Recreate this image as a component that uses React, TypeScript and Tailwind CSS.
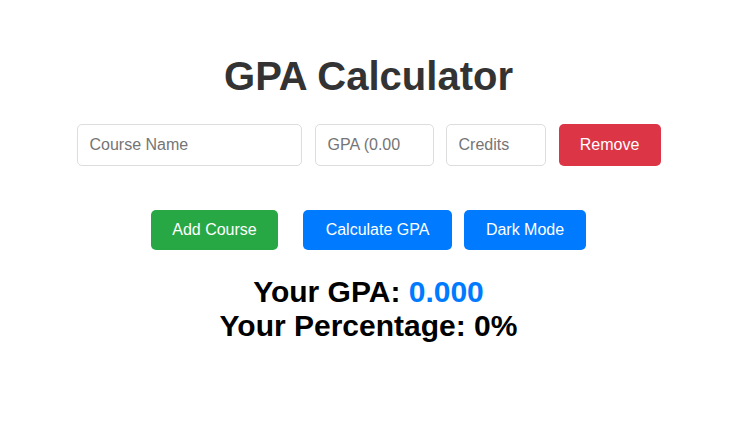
import { useState } from "react";

type Course = {
  name: string;
  gpa: string;
  credits: string;
};

export default function App() {
  const [courses, setCourses] = useState<Course[]>([
    { name: "", gpa: "", credits: "" },
  ]);
  const [gpa, setGpa] = useState(0);

  function calculate() {
    let total = 0;
    let credits = 0;
    courses.forEach((c) => {
      const g = Number(c.gpa) || 0;
      const cr = Number(c.credits) || 0;
      total += g * cr;
      credits += cr;
    });
    setGpa(credits ? total / credits : 0);
  }

  const percentage = Math.round((gpa / 4) * 100);

  return (
    <div className="min-h-screen bg-white font-['Liberation_Sans',Arial,sans-serif]">
      <div className="flex flex-col items-center pt-[53px]">
        <h1 className="text-[40px] font-bold leading-[46px] text-[#333]">
          GPA Calculator
        </h1>

        <div className="mt-[25px] flex flex-col gap-3">
          {courses.map((course, i) => (
            <div key={i} className="flex items-center gap-3">
              <input
                placeholder="Course Name"
                value={course.name}
                onChange={(e) => {
                  const next = [...courses];
                  next[i] = { ...course, name: e.target.value };
                  setCourses(next);
                }}
                className="h-[42px] w-[225px] rounded-[5px] border border-[#ddd] px-3 text-base text-[#333] outline-none placeholder:text-[#757575]"
              />
              <input
                placeholder="GPA (0.00"
                value={course.gpa}
                onChange={(e) => {
                  const next = [...courses];
                  next[i] = { ...course, gpa: e.target.value };
                  setCourses(next);
                }}
                className="ml-[1px] h-[42px] w-[119px] rounded-[5px] border border-[#ddd] px-3 text-base text-[#333] outline-none placeholder:text-[#757575]"
              />
              <input
                placeholder="Credits"
                value={course.credits}
                onChange={(e) => {
                  const next = [...courses];
                  next[i] = { ...course, credits: e.target.value };
                  setCourses(next);
                }}
                className="h-[42px] w-[100px] rounded-[5px] border border-[#ddd] px-3 text-base text-[#333] outline-none placeholder:text-[#757575]"
              />
              <button
                type="button"
                onClick={() => setCourses(courses.filter((_, j) => j !== i))}
                className="ml-[1px] h-[42px] w-[102px] rounded-[5px] bg-[#dc3545] text-base text-white"
              >
                Remove
              </button>
            </div>
          ))}
        </div>

        <div className="mt-[44px] flex items-center gap-3">
          <button
            type="button"
            onClick={() =>
              setCourses([...courses, { name: "", gpa: "", credits: "" }])
            }
            className="mr-[13px] h-10 w-[127px] rounded-[5px] bg-[#28a745] text-base text-white"
          >
            Add Course
          </button>
          <button
            type="button"
            onClick={calculate}
            className="h-10 w-[149px] rounded-[5px] bg-[#007bff] text-base text-white"
          >
            Calculate GPA
          </button>
          <button
            type="button"
            className="h-10 w-[122px] rounded-[5px] bg-[#007bff] text-base text-white"
          >
            Dark Mode
          </button>
        </div>

        <div className="mt-[25px] text-center text-[30px] font-bold leading-[34px] text-black">
          <p>
            Your GPA: <span className="text-[#007bff]">{gpa.toFixed(3)}</span>
          </p>
          <p>Your Percentage: {percentage}%</p>
        </div>
      </div>
    </div>
  );
}
